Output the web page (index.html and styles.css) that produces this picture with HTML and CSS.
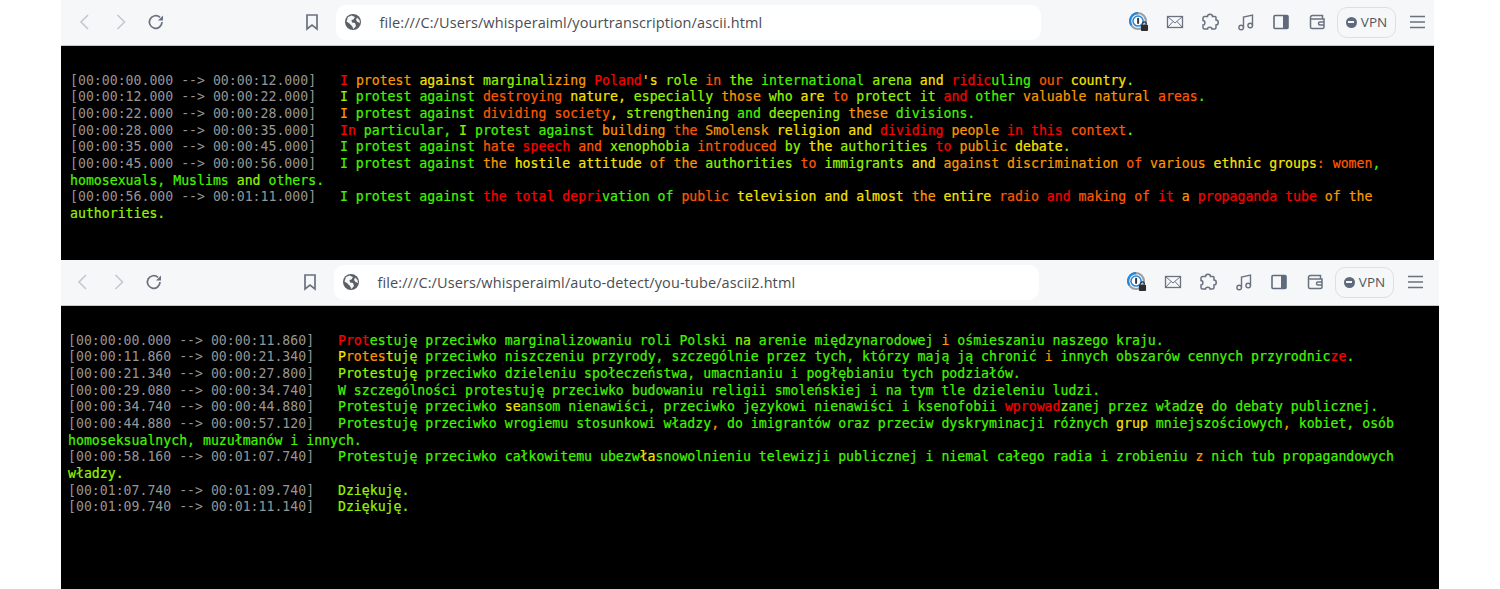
FILE: index.html
```html
<!DOCTYPE html>
<html lang="en">
<head>
<meta charset="utf-8">
<title>Transcriptions</title>
<link rel="stylesheet" href="styles.css">
</head>
<body>
<svg class="defs" aria-hidden="true">
  <symbol id="i-back" viewBox="0 0 20 20"><path d="M13 3 6 10l7 7" fill="none" stroke-width="1.6" stroke="currentColor"/></symbol>
  <symbol id="i-forward" viewBox="0 0 20 20"><path d="M6.500 3l7 7-7 7" fill="none" stroke-width="1.600" stroke="currentColor"/></symbol>
  <symbol id="i-reload" viewBox="0 0 20 20"><path d="M16 10a6.300 6.300 0 1 1-2-4.600" fill="none" stroke-width="1.700" stroke="currentColor"/><path d="M17 3.500v5h-5z" fill="currentColor"/></symbol>
  <symbol id="i-bookmark" viewBox="0 0 20 20"><path d="M5 3h10v14l-5-4-5 4z" fill="none" stroke-width="1.700" stroke="currentColor"/></symbol>
  <symbol id="i-globe" viewBox="0 0 18 18"><circle cx="9" cy="9" r="8" fill="#5b5f66"/><path d="M4 4l3.500-1.500L11 4 9.500 6.500 7.500 7l.5 2.500 3 .5 1 3-2.500 3L8 13 5.500 10.500 2.500 8.500zM13 4.500l2.500 2.500.5 3-2.500-1-1.500-2z" fill="#f6f7f9"/></symbol>
  <symbol id="i-pass" viewBox="0 0 21 21"><circle cx="9.500" cy="9.500" r="8.300" fill="none" stroke="#9aa0a8" stroke-width="2.200"/><path d="M2.500 14A8.300 8.300 0 0 1 9.500 1.200" fill="none" stroke="#2a86d8" stroke-width="2.200"/><circle cx="9.500" cy="9.500" r="5.300" fill="#fff" stroke="#2a86d8" stroke-width="1.600"/><rect x="8.500" y="6" width="2.100" height="6.500" rx="1" fill="#34383d"/><rect x="12.500" y="13.500" width="7.500" height="6.500" rx="1" fill="#2b2d31"/><path d="M14.400 13.500v-1.300a1.900 1.900 0 0 1 3.800 0v1.300" fill="none" stroke="#2b2d31" stroke-width="1.200"/></symbol>
  <symbol id="i-mail" viewBox="0 0 20 20"><rect x="2.500" y="4.500" width="15" height="11" fill="none" stroke="currentColor" stroke-width="1.300"/><path d="M2.500 4.500 10 11l7.500-6.500M2.500 15.500 8 9.500M17.500 15.500 12 9.500" fill="none" stroke="currentColor" stroke-width="1"/></symbol>
  <symbol id="i-puzzle" viewBox="0 0 20 20"><path d="M7.500 4.500c0-3 5-3 5 0h2.500a1 1 0 0 1 1 1V8c3 0 3 5 0 5v2.500a1.500 1.500 0 0 1-1.500 1.500H12c0-2.500-4.500-2.500-4.500 0H4.500A1.500 1.500 0 0 1 3 15.500V13c2.500 0 2.500-4.500 0-4.500V6a1.500 1.500 0 0 1 1.500-1.500z" fill="none" stroke="currentColor" stroke-width="1.500"/></symbol>
  <symbol id="i-music" viewBox="0 0 20 20"><path d="M7.500 15.500V5l9-2v10.500" fill="none" stroke="currentColor" stroke-width="1.400"/><circle cx="5.200" cy="15.500" r="2.300" fill="none" stroke="currentColor" stroke-width="1.400"/><circle cx="14.200" cy="13.500" r="2.300" fill="none" stroke="currentColor" stroke-width="1.400"/></symbol>
  <symbol id="i-sidebar" viewBox="0 0 20 20"><rect x="3" y="3.500" width="14" height="13" rx="1" fill="none" stroke="#5f6b7d" stroke-width="1.600"/><rect x="12" y="3.500" width="5" height="13" fill="#5f6b7d"/></symbol>
  <symbol id="i-wallet" viewBox="0 0 20 20"><path d="M3.500 6V15a1.500 1.500 0 0 0 1.500 1.500h10.500A1.500 1.500 0 0 0 17 15V7H4.500a1 1 0 0 1-1-1 2 2 0 0 1 2-2.500h10V7" fill="none" stroke="currentColor" stroke-width="1.500"/><path d="M17 10h-4a1.500 1.500 0 0 0 0 3h4" fill="none" stroke="currentColor" stroke-width="1.500"/></symbol>
  <symbol id="i-menu" viewBox="0 0 20 20"><path d="M3 4.500h15M3 10h15M3 15.500h15" fill="none" stroke="currentColor" stroke-width="1.500"/></symbol>
</svg>

<main class="page">
  <section class="window window-first">
    <header class="toolbar">
      <svg class="icon dim"><use href="#i-back"/></svg>
      <svg class="icon dim"><use href="#i-forward"/></svg>
      <svg class="icon"><use href="#i-reload"/></svg>
      <svg class="icon bookmark"><use href="#i-bookmark"/></svg>
      <div class="address"><svg class="globe"><use href="#i-globe"/></svg><span class="url">file:///C:/Users/whisperaiml/yourtranscription/ascii.html</span></div>
      <div class="tools">
        <svg class="icon"><use href="#i-pass"/></svg>
        <svg class="icon"><use href="#i-mail"/></svg>
        <svg class="icon"><use href="#i-puzzle"/></svg>
        <svg class="icon"><use href="#i-music"/></svg>
        <svg class="icon"><use href="#i-sidebar"/></svg>
        <svg class="icon"><use href="#i-wallet"/></svg>
        <div class="vpn"><span class="vpn-dot"></span>VPN</div>
        <svg class="icon menu"><use href="#i-menu"/></svg>
      </div>
    </header>
    <div class="console">
      <div class="line"><span class="t">[00:00:00.000 --&gt; 00:00:12.000]</span>   <span class="r">I</span> <span class="a">protest</span> <span class="y">against</span> <span class="l">marginal</span><span class="a">izing</span> <span class="r">Poland</span><span class="y">'s</span> <span class="l">role</span> <span class="o">in</span> <span class="l">the</span> <span class="g">international</span> <span class="l">arena</span> <span class="y">and</span> <span class="r">ridic</span><span class="g">uling</span> <span class="o">our</span> <span class="y">country</span><span class="l">.</span></div>
      <div class="line"><span class="t">[00:00:12.000 --&gt; 00:00:22.000]</span>   <span class="l">I</span> protest against <span class="o">destroying</span> <span class="y">nature,</span> <span class="l">especially</span> <span class="a">those</span> <span class="l">who</span> <span class="y">are</span> <span class="o">to</span> <span class="l">protect</span> <span class="l">it</span> <span class="r">and</span> other <span class="a">valuable</span> <span class="a">natural</span> <span class="o">areas</span>.</div>
      <div class="line"><span class="t">[00:00:22.000 --&gt; 00:00:28.000]</span>   <span class="a">I</span> protest against <span class="o">dividing</span> <span class="o">society</span><span class="y">,</span> <span class="l">strengthening</span> and <span class="l">deepening</span> <span class="a">these</span> divisions.</div>
      <div class="line"><span class="t">[00:00:28.000 --&gt; 00:00:35.000]</span>   <span class="r">In</span> particular, <span class="l">I</span> protest against <span class="a">building</span> <span class="o">the</span> <span class="a">Smolensk</span> <span class="y">religion</span> <span class="y">and</span> <span class="r">dividing</span> <span class="a">people</span> <span class="r">in</span> <span class="r">this</span> <span class="o">context</span><span class="l">.</span></div>
      <div class="line"><span class="t">[00:00:35.000 --&gt; 00:00:45.000]</span>   I protest against <span class="o">hate</span> <span class="r">speech</span> <span class="o">and</span> <span class="l">xenophobia</span> <span class="o">introduced</span> <span class="l">by</span> <span class="y">the</span> <span class="l">authorities</span> <span class="r">to</span> <span class="a">public</span> <span class="y">debate</span><span class="l">.</span></div>
      <div class="line"><span class="t">[00:00:45.000 --&gt; 00:00:56.000]</span>   I protest against <span class="a">the</span> <span class="y">hostile</span> <span class="y">attitude</span> <span class="a">of</span> <span class="a">the</span> <span class="l">authorities</span> <span class="o">to</span> <span class="l">immigrants</span> <span class="y">and</span> <span class="a">against</span> <span class="a">discrimination</span> <span class="o">of</span> <span class="a">various</span> <span class="y">ethnic</span> <span class="y">groups</span><span class="o">: women</span>, homosexuals, Muslims <span class="l">and</span> others.</div>
      <div class="line"><span class="t">[00:00:56.000 --&gt; 00:01:11.000]</span>   I protest against <span class="r">the</span> <span class="r">total</span> <span class="r">depri</span>vation of <span class="o">public</span> <span class="y">television</span> <span class="y">and</span> <span class="y">almost</span> <span class="a">the</span> <span class="y">entire</span> <span class="o">radio</span> <span class="r">and</span> <span class="o">making</span> <span class="o">of</span> <span class="r">it</span> <span class="a">a</span> <span class="r">propaganda</span> <span class="r">tube</span> <span class="a">of</span> <span class="a">the</span> <span class="l">authorities.</span></div>
    </div>
  </section>

  <section class="window window-second">
    <header class="toolbar">
      <svg class="icon dim"><use href="#i-back"/></svg>
      <svg class="icon dim"><use href="#i-forward"/></svg>
      <svg class="icon"><use href="#i-reload"/></svg>
      <svg class="icon bookmark"><use href="#i-bookmark"/></svg>
      <div class="address"><svg class="globe"><use href="#i-globe"/></svg><span class="url">file:///C:/Users/whisperaiml/auto-detect/you-tube/ascii2.html</span></div>
      <div class="tools">
        <svg class="icon"><use href="#i-pass"/></svg>
        <svg class="icon"><use href="#i-mail"/></svg>
        <svg class="icon"><use href="#i-puzzle"/></svg>
        <svg class="icon"><use href="#i-music"/></svg>
        <svg class="icon"><use href="#i-sidebar"/></svg>
        <svg class="icon"><use href="#i-wallet"/></svg>
        <div class="vpn"><span class="vpn-dot"></span>VPN</div>
        <svg class="icon menu"><use href="#i-menu"/></svg>
      </div>
    </header>
    <div class="console">
      <div class="line"><span class="t">[00:00:00.000 --&gt; 00:00:11.860]</span>   <span class="r">Prot</span>estuję przeciwko marginalizowaniu roli Polski <span class="l">na</span> arenie międzynarodowej <span class="a">i</span> ośmieszaniu naszego kraju.</div>
      <div class="line"><span class="t">[00:00:11.860 --&gt; 00:00:21.340]</span>   <span class="y">P</span><span class="a">rotes</span><span class="y">t</span><span class="l">uję</span> przeciwko niszczeniu przyrody, szczególnie przez tych, którzy mają ją chronić <span class="a">i</span> innych obszarów cennych przyrodnic<span class="r">ze</span>.</div>
      <div class="line"><span class="t">[00:00:21.340 --&gt; 00:00:27.800]</span>   <span class="l">Protestuję</span> przeciwko dzieleniu społeczeństwa, umacnianiu i pogłębianiu tych podziałów.</div>
      <div class="line"><span class="t">[00:00:29.080 --&gt; 00:00:34.740]</span>   W szczególności protestuję przeciwko budowaniu religii smoleńskiej i na tym tle dzieleniu ludzi.</div>
      <div class="line"><span class="t">[00:00:34.740 --&gt; 00:00:44.880]</span>   Protestuję przeciwko <span class="y">se</span>ansom nienawiści, przeciwko językowi nienawiści i ksenofobii <span class="r">wprowad</span><span class="l">z</span>anej przez władz<span class="y">ę</span> do debaty publicznej.</div>
      <div class="line"><span class="t">[00:00:44.880 --&gt; 00:00:57.120]</span>   Protestuję przeciwko wrogiemu stosunkowi władzy<span class="a">,</span> do imigrantów oraz przeciw dyskryminacji różnych <span class="y">grup</span> mniejszościowych<span class="a">,</span> kobiet, osób homoseksualnych, muzułmanów i innych.</div>
      <div class="line"><span class="t">[00:00:58.160 --&gt; 00:01:07.740]</span>   Protestuję przeciwko całkowitemu ubezw<span class="y">ła</span>snowolnieniu telewizji publicznej i niemal całego radia i zrobieniu <span class="a">z</span> nich tub propagandowych <span class="l">władzy.</span></div>
      <div class="line"><span class="t">[00:01:07.740 --&gt; 00:01:09.740]</span>   <span class="l">Dziękuję.</span></div>
      <div class="line"><span class="t">[00:01:09.740 --&gt; 00:01:11.140]</span>   <span class="l">Dziękuję.</span></div>
    </div>
  </section>
</main>
</body>
</html>
```
FILE: styles.css
```css
html, body {
  margin: 0;
  padding: 0;
  background: #fff;
}

.defs {
  display: none;
}

.page {
  display: flex;
  flex-direction: column;
  margin-left: 61px;
  height: 589px;
  overflow: hidden;
}

.window {
  display: flex;
  flex-direction: column;
}

.window-first {
  width: 1373px;
  height: 260px;
  flex: none;
}

.window-second {
  width: 1378px;
  height: 329px;
  flex: none;
}

.toolbar {
  display: flex;
  align-items: center;
  flex: none;
  box-sizing: border-box;
  height: 46px;
  padding-bottom: 1px;
  gap: 15.5px;
  background: #f6f7f9;
  border-bottom: 1px solid #c6c8cb;
  color: #6a7280;
}

.window-first .toolbar {
  padding-left: 14px;
}

.window-second .toolbar {
  padding-left: 12px;
}

.icon {
  width: 20px;
  height: 20px;
  flex: none;
}

.icon.dim {
  color: #c3c8cf;
}

.icon.bookmark {
  margin-left: 120px;
}

.address {
  display: flex;
  align-items: center;
  gap: 18px;
  flex: none;
  box-sizing: border-box;
  width: 705px;
  height: 35px;
  margin-left: -1.500px;
  padding-left: 8px;
  background: #fff;
  border-radius: 10px;
}

.globe {
  width: 18px;
  height: 18px;
  flex: none;
}

.url {
  font-family: "Open Sans", "Noto Sans", sans-serif;
  font-size: 14.500px;
  letter-spacing: 0.1px;
  color: #4a4d52;
  white-space: nowrap;
}

.tools {
  display: flex;
  align-items: center;
  gap: 15.5px;
  margin-left: 73px;
}

.vpn {
  display: flex;
  align-items: center;
  justify-content: center;
  gap: 4px;
  box-sizing: border-box;
  width: 59px;
  height: 31px;
  margin-left: -5px;
  border: 1px solid #dcdfe4;
  border-radius: 10px;
  font-family: "Open Sans", "Noto Sans", sans-serif;
  font-size: 13.500px;
  color: #4f5660;
}

.vpn-dot {
  position: relative;
  width: 11px;
  height: 11px;
  border-radius: 50%;
  background: #5f6b7d;
}

.vpn-dot::after {
  content: "";
  position: absolute;
  left: 2.500px;
  top: 4.500px;
  width: 6px;
  height: 2px;
  background: #f6f7f9;
}

.icon.menu {
  margin-left: -5px;
}

.console {
  flex: 1;
  box-sizing: border-box;
  padding-top: 26.700px;
  background: #000;
  color: #44f500;
  font-family: "DejaVu Sans Mono", "Liberation Mono", monospace;
  font-size: 13.200px;
  line-height: 16.650px;
  -webkit-text-stroke: 0.2px currentColor;
}

.window-first .console {
  padding-left: 9px;
}

.window-second .console {
  padding-left: 7px;
}

.line {
  white-space: pre-wrap;
}

.t { color: #969696; -webkit-text-stroke: 0; }
.r { color: #ff0000; }
.o { color: #ff5a00; }
.a { color: #fa9a00; }
.y { color: #f8e400; }
.l { color: #94f400; }
.g { color: #44f500; }
```
